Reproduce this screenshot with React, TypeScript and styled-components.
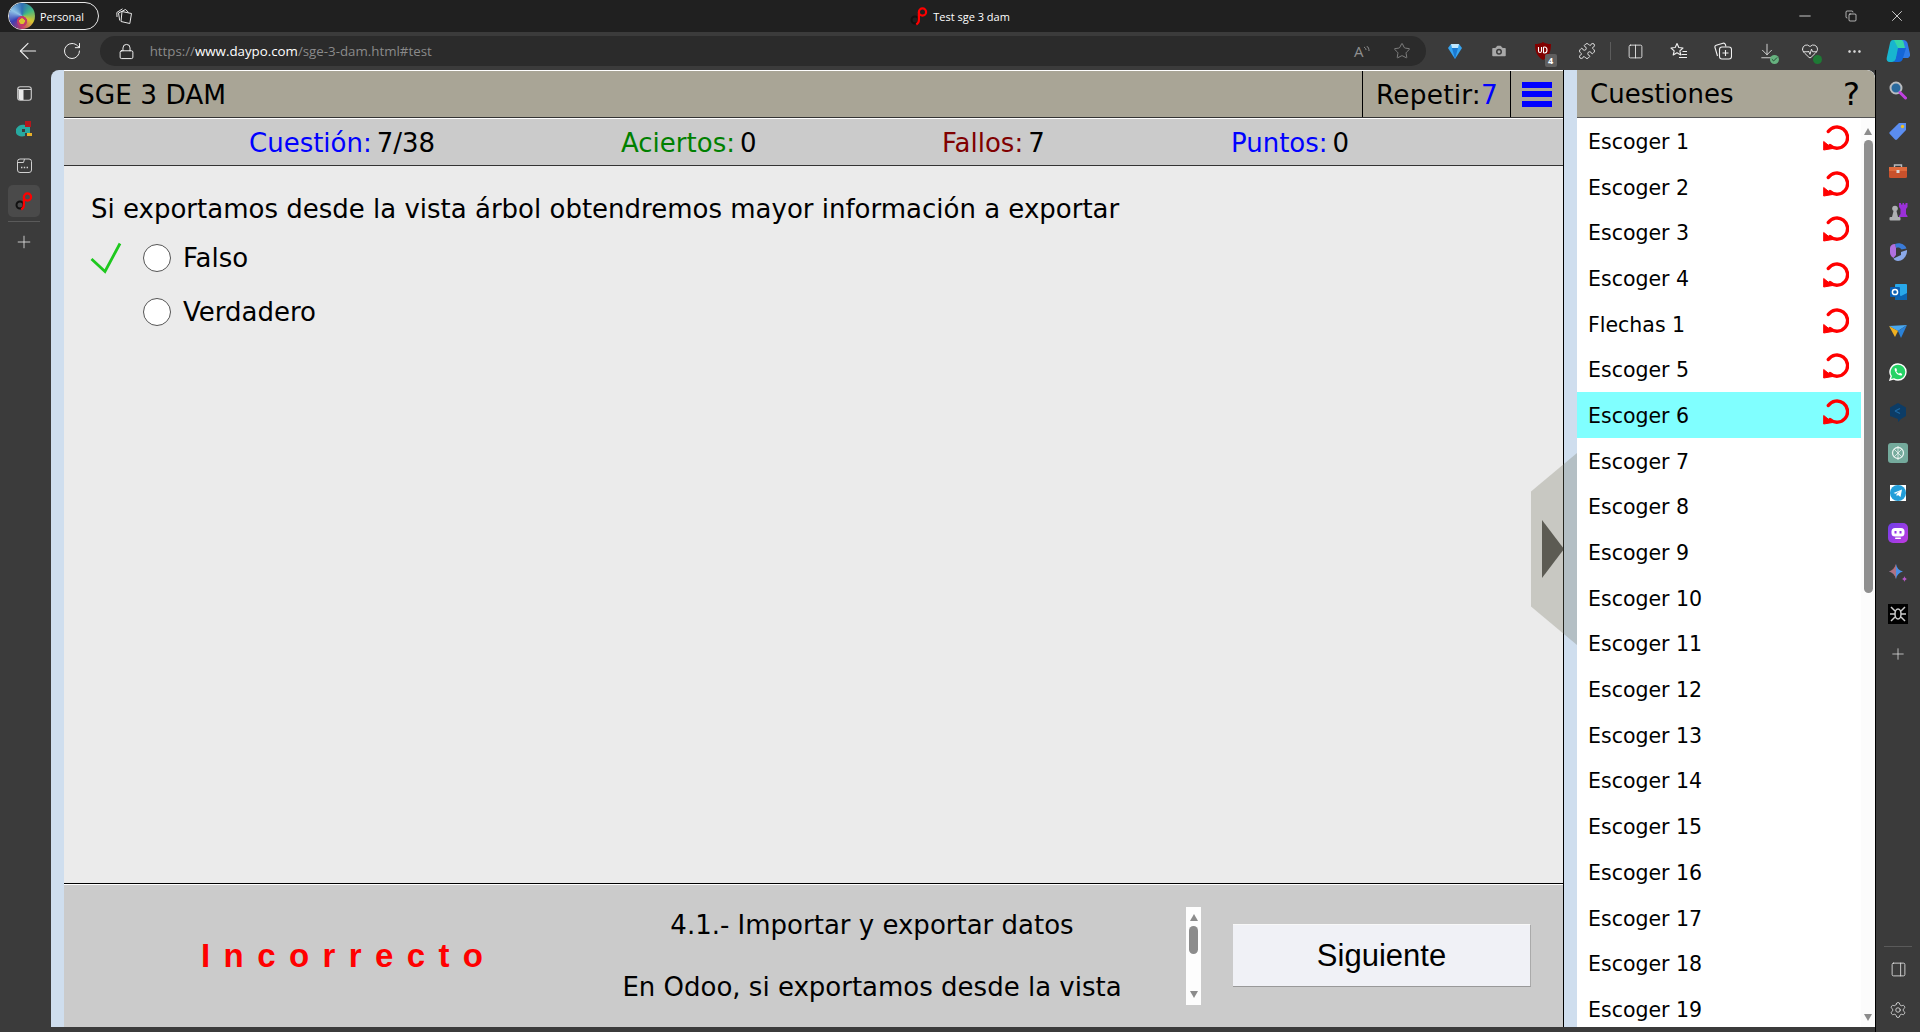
import React from 'react';
import styled, { createGlobalStyle } from 'styled-components';
import {
  ArrowLeft,
  RotateCw,
  Lock,
  Star,
  Puzzle,
  Columns2,
  ArrowDownToLine,
  HeartPulse,
  MoreHorizontal,
  Plus,
  Settings,
  PanelRight,
  Minus,
  X,
  Copy,
  Camera,
  Check,
} from 'lucide-react';

const GlobalStyle = createGlobalStyle`
  html, body {
    margin: 0;
    padding: 0;
    height: 100%;
    background: #3b3b3b;
    overflow: hidden;
  }
  #root { height: 100%; }
  * { box-sizing: border-box; }
`;

const Page = styled.div`
  width: 1920px;
  height: 1032px;
  display: flex;
  flex-direction: column;
  font-family: 'DejaVu Sans', Verdana, sans-serif;
  background: #3b3b3b;
`;

const TitleBar = styled.div`
  height: 32px;
  background: #202020;
  display: grid;
  grid-template-columns: 1fr auto 1fr;
  align-items: center;
  color: #fff;
  font-family: 'Open Sans', sans-serif;
  font-size: 11px;
`;

const TitleLeft = styled.div`
  display: flex;
  align-items: center;
  padding-left: 8px;
  gap: 17px;
`;

const ProfilePill = styled.div`
  height: 28px;
  width: 91px;
  border: 1px solid #e8e8e8;
  border-radius: 14px;
  display: flex;
  align-items: center;
  gap: 5px;
  font-size: 10.8px;
`;

const Avatar = styled.div`
  width: 26px;
  height: 26px;
  border-radius: 50%;
  background:
    radial-gradient(circle at 50% 70%, #d9c530 0 12%, #c23a6b 13% 22%, transparent 24%),
    conic-gradient(#2f6fb5, #42b883, #d9c530, #c23a6b, #3a3fb5, #8fc4e8, #2f6fb5);
`;

const PageTitle = styled.div`
  display: flex;
  align-items: center;
  gap: 5px;
`;

const WindowControls = styled.div`
  display: flex;
  justify-content: flex-end;
  color: #fff;
`;

const WindowButton = styled.div`
  width: 46px;
  height: 32px;
  display: flex;
  align-items: center;
  justify-content: center;
`;

const Toolbar = styled.div`
  height: 38px;
  background: #3b3b3b;
  display: flex;
  align-items: center;
  color: #f0f0f0;
`;

const NavButton = styled.div`
  width: 44px;
  height: 32px;
  display: flex;
  align-items: center;
  justify-content: center;
  &:first-child { margin-left: 6px; }
`;

const AddressBar = styled.div`
  width: 1332px;
  margin-left: 6px;
  height: 30px;
  border-radius: 15px;
  background: #2b2b2b;
  display: flex;
  align-items: center;
  padding: 0 4px 0 18px;
  font-family: 'Open Sans', sans-serif;
  font-size: 13.3px;
  color: #8a8a8a;
  gap: 15px;
`;

const Url = styled.div`
  flex: 1;
  b { color: #fff; font-weight: 400; }
`;

const AddressIcon = styled.div`
  width: 40px;
  margin-left: -15px;
  display: flex;
  align-items: center;
  justify-content: center;
  color: #8f8f8f;
  font-size: 15px;
`;

const ExtensionRow = styled.div`
  display: flex;
  align-items: center;
  padding-left: 7px;
`;

const ExtensionSlot = styled.div`
  position: relative;
  width: 43.8px;
  height: 32px;
  display: flex;
  align-items: center;
  justify-content: center;
`;

const ToolDivider = styled.div`
  width: 1px;
  height: 18px;
  margin: 0 2px;
  background: #5c5c5c;
`;

const CountBadge = styled.span`
  position: absolute;
  right: 8px;
  bottom: 0;
  width: 12px;
  height: 13px;
  background: #5f5f5f;
  border-radius: 2px;
  font-size: 9px;
  font-weight: 700;
  color: #fff;
  text-align: center;
  line-height: 13px;
  font-family: 'Open Sans', sans-serif;
`;

const StatusDot = styled.span<{ $color: string }>`
  position: absolute;
  right: 10px;
  bottom: 3px;
  width: 9px;
  height: 9px;
  border-radius: 50%;
  background: ${(p) => p.$color};
  display: flex;
  align-items: center;
  justify-content: center;
`;

const Workspace = styled.div`
  flex: 1;
  display: flex;
  min-height: 0;
`;

const LeftRail = styled.div`
  width: 51px;
  display: flex;
  flex-direction: column;
  align-items: center;
  padding: 7px 3px 0 0;
  color: #e4e4e4;
`;

const RailIcon = styled.div<{ $active?: boolean }>`
  width: 32px;
  height: 32px;
  margin-bottom: 4px;
  border-radius: 5px;
  display: flex;
  align-items: center;
  justify-content: center;
  background: ${(p) => (p.$active ? '#4a4a4a' : 'transparent')};
`;

const RailDivider = styled.div`
  width: 32px;
  height: 1px;
  background: #5a5a5a;
  margin-bottom: 10px;
`;

const Sheet = styled.div`
  width: 1824px;
  height: 957px;
  display: flex;
  background: #cfdeee;
  border-radius: 8px 8px 0 0;
  padding-left: 13px;
  overflow: hidden;
  position: relative;
  color: #000;
`;

const MainPane = styled.div`
  width: 1500px;
  display: flex;
  flex-direction: column;
  border-right: 1px solid #000;
  background: #fff;
`;

const HeaderBar = styled.div`
  height: 47px;
  margin-top: 1px;
  background: #a9a596;
  border-bottom: 1px solid #333;
  display: flex;
  align-items: stretch;
  font-size: 26.4px;
`;

const HeaderTitle = styled.div`
  flex: 1;
  padding-left: 14px;
  display: flex;
  align-items: center;
`;

const HeaderCell = styled.div<{ $w: number; $center?: boolean }>`
  width: ${(p) => p.$w}px;
  border-left: 1px solid #000;
  display: flex;
  align-items: center;
  justify-content: ${(p) => (p.$center ? 'center' : 'flex-start')};
  padding-left: ${(p) => (p.$center ? 0 : 13)}px;
  letter-spacing: ${(p) => (p.$center ? 0 : 0.2)}px;
`;

const Blue = styled.span`
  color: #0000ff;
`;

const Burger = styled.div`
  width: 30px;
  height: 25px;
  display: flex;
  flex-direction: column;
  justify-content: space-between;
  span {
    height: 6px;
    background: #0000ff;
  }
`;

const StatsBar = styled.div`
  height: 47px;
  margin-top: 1px;
  padding: 2px 0 0 185px;
  background: #cbcbcb;
  border-bottom: 1px solid #333;
  display: flex;
  align-items: center;
  font-size: 26px;
`;

const Stat = styled.div<{ $w: number; $color: string }>`
  width: ${(p) => p.$w}px;
  white-space: nowrap;
  em {
    font-style: normal;
    color: ${(p) => p.$color};
    margin-right: 5px;
  }
`;

const QuestionArea = styled.div`
  flex: 1;
  padding: 26px 27px 0;
  font-size: 26px;
  background: #ebebeb;
`;

const QuestionText = styled.div`
  height: 39px;
  line-height: 34px;
  white-space: nowrap;
`;

const AnswerRow = styled.div`
  height: 54px;
  display: flex;
  align-items: center;
`;

const TickSlot = styled.div`
  width: 52px;
  margin-left: -1px;
  margin-right: 1px;
  display: flex;
  align-items: center;
`;

const Radio = styled.span`
  width: 28px;
  height: 28px;
  border-radius: 50%;
  border: 1.5px solid #555;
  background: #fff;
  margin-right: 12px;
`;

const Footer = styled.div`
  height: 144px;
  border-top: 1px solid #000;
  box-shadow: inset 0 1px 0 #fff;
  background: #cbcbcb;
  display: flex;
  align-items: center;
`;

const Verdict = styled.div`
  width: 541px;
  padding: 1px 0 0 137px;
  font-family: 'Liberation Sans', Arial, sans-serif;
  font-weight: 700;
  font-size: 33px;
  letter-spacing: 13.4px;
  color: #ff0000;
  white-space: nowrap;
`;

const Explanation = styled.div`
  width: 534px;
  height: 120px;
  padding-top: 10px;
  text-align: center;
  font-size: 26px;
  overflow: hidden;
  p {
    margin: 0;
    height: 62px;
    line-height: 38px;
    white-space: nowrap;
  }
`;

const MiniScroll = styled.div`
  width: 15px;
  height: 98px;
  margin-left: 47px;
  background: #fdfdfd;
  display: flex;
  flex-direction: column;
  align-items: center;
  justify-content: space-between;
  padding: 7px 0;
`;

const MiniThumb = styled.div`
  width: 9px;
  height: 28px;
  border-radius: 5px;
  background: #8c8c8c;
  margin-top: -42px;
  margin-bottom: -10px;
`;

const ArrowUp = styled.span`
  width: 0;
  height: 0;
  border-left: 4px solid transparent;
  border-right: 4px solid transparent;
  border-bottom: 7px solid #8c8c8c;
`;

const ArrowDown = styled(ArrowUp)`
  border-bottom: 0;
  border-top: 7px solid #8c8c8c;
`;

const NextButton = styled.div`
  width: 298px;
  height: 63px;
  margin-left: 32px;
  background: #f0f1f6;
  border-top: 1px solid #f8f8f8;
  border-bottom: 1px solid #999;
  border-right: 1px solid #aaa;
  display: flex;
  align-items: center;
  justify-content: center;
  font-family: 'Liberation Sans', Arial, sans-serif;
  font-size: 31px;
`;

const Gutter = styled.div`
  width: 13px;
`;

const SidePane = styled.div`
  width: 298px;
  display: flex;
  flex-direction: column;
  background: #fff;
  border-radius: 0 8px 0 0;
  overflow: hidden;
`;

const SideHeader = styled.div`
  height: 48px;
  background: #a9a596;
  border-bottom: 1px solid #555;
  display: flex;
  align-items: center;
  justify-content: space-between;
  padding: 0 15px 0 13px;
  font-size: 26px;
  flex-shrink: 0;
  span { font-size: 32px; }
`;

const SideBody = styled.div`
  flex: 1;
  display: flex;
  min-height: 0;
  overflow: hidden;
`;

const QuestionList = styled.div`
  width: 284px;
  flex-shrink: 0;
`;

const QuestionRow = styled.div<{ $current?: boolean }>`
  height: 45.7px;
  display: flex;
  align-items: center;
  justify-content: space-between;
  padding: 2px 12px 0 11px;
  font-size: 20.5px;
  background: ${(p) => (p.$current ? '#80ffff' : 'transparent')};
  svg { margin-bottom: 8px; flex-shrink: 0; }
`;

const SideScroll = styled.div`
  flex: 1;
  background: #fcfcfc;
  display: flex;
  flex-direction: column;
  align-items: center;
  padding-top: 10px;
  position: relative;
`;

const SideThumb = styled.div`
  width: 9px;
  height: 453px;
  margin-top: 5px;
  border-radius: 5px;
  background: #8f8f8f;
`;

const SideArrowBottom = styled(ArrowDown)`
  position: absolute;
  bottom: 6px;
`;

const Pull = styled.div`
  position: absolute;
  left: 1480px;
  top: 383px;
  width: 46px;
  height: 192px;
  background: rgba(120, 118, 100, 0.3);
  clip-path: polygon(0 20%, 100% 0, 100% 100%, 0 80%);
  z-index: 2;
`;

const PullArrow = styled.div`
  position: absolute;
  left: 1491px;
  top: 450px;
  width: 0;
  height: 0;
  border-top: 29px solid transparent;
  border-bottom: 29px solid transparent;
  border-left: 22px solid rgba(50, 48, 40, 0.72);
  z-index: 3;
`;

const RightRail = styled.div`
  flex: 1;
  border-left: 1px solid #000;
  display: flex;
  flex-direction: column;
  align-items: center;
  padding: 1px 0 2px;
  color: #e4e4e4;
`;

const RailApp = styled.div`
  height: 40.2px;
  display: flex;
  align-items: center;
  justify-content: center;
  flex-shrink: 0;
`;

const RailSpacer = styled.div`
  flex: 1;
`;

const RailRule = styled.div`
  width: 28px;
  height: 1px;
  background: #5a5a5a;
  margin-bottom: 3px;
`;

const RetryIcon = () => (
  <svg width="26" height="26" viewBox="0 0 26 26" fill="none">
    <path d="M5.300 6.500A10.600 10.600 0 1 1 7 20.600" stroke="#ff0000" strokeWidth="3.400" strokeLinecap="round" />
    <polygon points="0.700,16.500 0.700,25 9.500,23.500" fill="#ff0000" stroke="#ff0000" strokeWidth="1" strokeLinejoin="round" />
  </svg>
);

const DaypoMark = () => (
  <svg width="18" height="19" viewBox="0 0 18 19" fill="none">
    <circle cx="5" cy="13" r="3.500" stroke="#111" strokeWidth="2" />
    <circle cx="12.500" cy="5" r="3.600" stroke="#ff0000" strokeWidth="2.200" />
    <path d="M8.900 5v8c0 2-1 3.500-2.600 4.500" stroke="#ff0000" strokeWidth="2.200" />
  </svg>
);

const CollectionsTab = () => (
  <svg width="17" height="17" viewBox="0 0 17 17" fill="none" stroke="#e6e6e6" strokeWidth="1">
    <path d="M6 3.500l9.500 2-1.700 10-8.800-2z" strokeLinejoin="round" />
    <path d="M3.700 12.500L2.500 5l7-3.500 3 2.800" strokeLinejoin="round" />
    <path d="M1 9L.8 4.500 6.500.8" strokeLinejoin="round" />
  </svg>
);

const ReadAloudWaves = () => (
  <svg width="7" height="10" viewBox="0 0 7 10" fill="none" stroke="#8f8f8f" strokeWidth="1">
    <path d="M1 1c1.500 1 2 2 2 3M3.500 0C5.500 1 6 3 6 5" />
  </svg>
);

const DiamondIcon = () => (
  <svg width="14" height="16" viewBox="0 0 14 16">
    <path d="M3 1h8l3 4-7 11L0 5z" fill="#36a4f0" />
    <path d="M3 1h8l-1 4H4z" fill="#bfe8ff" />
    <path d="M4 5h6l-3 11z" fill="#1a78d0" />
  </svg>
);

const UblockIcon = () => (
  <svg width="16" height="18" viewBox="0 0 16 18">
    <path d="M8 0c2 1.500 5 2 8 2 0 7-1.500 12-8 16C1.500 14 0 9 0 2c3 0 6-.5 8-2z" fill="#800000" />
    <path d="M3.500 5v4a1.500 1.500 0 0 0 3 0V5M8.500 5v6M8.500 5h1a2.500 3 0 0 1 0 6h-1" stroke="#fff" strokeWidth="1.100" fill="none" />
  </svg>
);

const FavoritesIcon = () => (
  <svg width="18" height="18" viewBox="0 0 18 18" fill="none" stroke="#f0f0f0" strokeWidth="1.100" strokeLinejoin="round">
    <path d="M7 1.500l1.800 4 4.200.5-3.200 2.800 1 4.200L7 10.700 3.200 13l1-4.200L1 6l4.200-.5z" />
    <path d="M12.500 9.500H17M11.500 12.500H17M9 15.500h8" />
  </svg>
);

const AddCollectionIcon = () => (
  <svg width="18" height="18" viewBox="0 0 18 18" fill="none" stroke="#f0f0f0" strokeWidth="1.100">
    <rect x="5.500" y="5" width="12" height="12" rx="2.500" />
    <path d="M11.500 8v6M8.500 11h6" />
    <path d="M3.500 14L1 5.500c-.3-1 .3-2 1.200-2.300L9 1.200c1-.3 2 .3 2.400 1.300l.5 2" strokeLinejoin="round" />
  </svg>
);

const CopilotIcon = () => (
  <svg width="24" height="24" viewBox="0 0 24 24">
    <path d="M7 1h8L10.500 19c-.5 2-2 4-4.500 4H3.500C1.500 23 .2 21 .7 19L4 4c.4-2 1.500-3 3-3z" fill="#18b5cf" />
    <path d="M13 1h4.500c2 0 3.500 1.500 4 3L24 15c.4 2-1 4-3 4h-5z" fill="#2e7be8" />
    <path d="M12 9h8l-3 10c-.5 2.500-2 4-4.500 4H6c2 0 3.500-1.500 4-4z" fill="#1466d8" />
    <path d="M8 1h7c1 0 2 .5 2.500 2L19 9h-7z" fill="#35d6a8" />
  </svg>
);

const SearchApp = () => (
  <svg width="18" height="20" viewBox="0 0 18 20" fill="none">
    <circle cx="7" cy="7" r="5.500" fill="#2a6a9e" stroke="#b9bcc0" strokeWidth="2" />
    <path d="M11 11.500l5.500 5.500" stroke="#c040e0" strokeWidth="3" strokeLinecap="round" />
  </svg>
);

const TagApp = () => (
  <svg width="18" height="18" viewBox="0 0 18 18">
    <path d="M10 1h7v7l-9 9.500a1.500 1.500 0 0 1-2 0L.8 12a1.500 1.500 0 0 1 0-2z" fill="#5b8df0" />
    <circle cx="13.500" cy="4.500" r="1.700" fill="#f0c020" />
  </svg>
);

const BriefcaseApp = () => (
  <svg width="18" height="16" viewBox="0 0 18 16" fill="none">
    <path d="M5.500 4V2h7v2" stroke="#b9bcc0" strokeWidth="1.400" />
    <rect y="4" width="18" height="11" rx="1.500" fill="#c8512c" />
    <rect y="4" width="18" height="4" fill="#e06a3c" />
    <rect x="7.500" y="7" width="3" height="3" fill="#d8d8d8" />
  </svg>
);

const ChessApp = () => (
  <svg width="19" height="19" viewBox="0 0 19 19">
    <circle cx="6" cy="6.500" r="2.800" fill="#aeb0b2" />
    <path d="M4.500 9h3l1.500 6H3z" fill="#aeb0b2" />
    <rect x="0.500" y="15" width="11" height="3.500" rx="1" fill="#aeb0b2" />
    <path d="M10 1h2v1.500h1.500V1h1.500v1.500h1.500V1h2v4l-1.500 2v5l1.500 2v1H10v-1l1.500-2V7L10 5z" fill="#9a30d8" />
  </svg>
);

const BingApp = () => (
  <svg width="17" height="18" viewBox="0 0 17 18">
    <path d="M5 1c5-2 10 .5 11.500 4.500l-5 1C10 4.500 8 4 6 5z" fill="#3a7bd8" />
    <path d="M0 5c0-2 2-4 5-4l1 4v7l-2.500 3C1.500 14 0 12 0 9z" fill="#b070e0" />
    <path d="M11 9l6-2c.5 5-3.500 11-9 11-2 0-4-1-4.500-2.500L11 12z" fill="#8aa8e8" />
    <path d="M6 6.500l5 2.500-5 3z" fill="#3a3b3c" />
  </svg>
);

const OutlookApp = () => (
  <svg width="17" height="16" viewBox="0 0 17 16">
    <rect x="5" y="0" width="12" height="16" rx="1" fill="#28a8ea" />
    <path d="M5 9l6 3 6-3v7H5z" fill="#0c64b0" />
    <rect x="0" y="3" width="10" height="10" rx="1" fill="#0a5fb4" />
    <circle cx="5" cy="8" r="2.600" fill="none" stroke="#fff" strokeWidth="1.500" />
  </svg>
);

const PaperPlaneApp = () => (
  <svg width="18" height="14" viewBox="0 0 18 14">
    <path d="M0 1l18-1-9 6z" fill="#49a8ef" />
    <path d="M9 6l9-6-6 13z" fill="#2a82d8" />
    <path d="M0 1l9 5-3 6z" fill="#f0b020" />
  </svg>
);

const WhatsAppIcon = () => (
  <svg width="18" height="18" viewBox="0 0 18 18">
    <path d="M9 1a8 8 0 0 1 0 16c-1.500 0-3-.4-4.200-1.100L1 17l1.200-3.800A8 8 0 0 1 9 1z" fill="#25d366" stroke="#fff" strokeWidth="1.400" />
    <path d="M5.700 5.500l1.400-.5 1 2.300-.8 1c.6 1.100 1.500 2 2.700 2.500l1-1 2.200 1.100-.5 1.500c-3.400.8-7.500-3.400-7-6.900z" fill="#fff" />
  </svg>
);

const HexApp = () => (
  <svg width="16" height="19" viewBox="0 0 16 19">
    <path d="M8 0l8 4.500V13l-5 3-3 3v-3l-8-3V4.500z" fill="#0c3c66" />
    <path d="M5 8l5-2.500M5 8l5 2.500" stroke="#1d6aa5" strokeWidth="1.200" />
  </svg>
);

const GptApp = () => (
  <svg width="20" height="20" viewBox="0 0 20 20" fill="none">
    <rect width="20" height="20" rx="3" fill="#74aa9c" />
    <circle cx="10" cy="10" r="5.500" stroke="#e8f2ef" strokeWidth="1.300" />
    <path d="M6 6l8 8M14 6l-8 8M10 3v14" stroke="#e8f2ef" strokeWidth="0.800" />
  </svg>
);

const TelegramApp = () => (
  <svg width="16" height="16" viewBox="0 0 16 16">
    <rect width="16" height="16" fill="#fff" />
    <circle cx="8" cy="8" r="8" fill="#229ed9" />
    <path d="M3.500 8L12 4.500 10.500 12 8 10l-1.300 1.300L6.500 9 10 6 5.500 8.800z" fill="#fff" />
  </svg>
);

const BotApp = () => (
  <svg width="20" height="20" viewBox="0 0 20 20">
    <defs>
      <linearGradient id="botFill" x1="0" y1="0" x2="1" y2="1">
        <stop offset="0" stopColor="#6d3fe8" />
        <stop offset="1" stopColor="#c23ae0" />
      </linearGradient>
    </defs>
    <rect width="20" height="20" rx="5" fill="url(#botFill)" />
    <rect x="3.500" y="5" width="13" height="8.500" rx="3.500" fill="#fff" />
    <rect x="6.500" y="8" width="2" height="2.500" fill="#9333ea" />
    <rect x="11.500" y="8" width="2" height="2.500" fill="#9333ea" />
    <rect x="7" y="14.500" width="6" height="1.500" rx="0.700" fill="#fff" />
  </svg>
);

const SparkApp = () => (
  <svg width="21" height="21" viewBox="0 0 21 21">
    <path d="M8 1c.8 4 3 6.500 7 7.500-4 1-6.200 3.500-7 7.500-.8-4-3-6.500-7-7.500 4-1 6.200-3.500 7-7.500z" fill="#4a90e8" />
    <path d="M1 8.500C4 7.800 6.500 5 8 1v15c-1-4-3.500-6.800-7-7.500z" fill="#d9655a" opacity="0.700" />
    <path d="M16.500 13c.3 1.800 1.200 2.700 3 3-1.800.3-2.700 1.200-3 3-.3-1.800-1.200-2.700-3-3 1.800-.3 2.700-1.200 3-3z" fill="#b858c8" />
  </svg>
);

const SpiderApp = () => (
  <svg width="20" height="20" viewBox="0 0 20 20" fill="none">
    <rect width="20" height="20" fill="#000" />
    <ellipse cx="10" cy="10" rx="3" ry="5" stroke="#ccc" strokeWidth="1.500" />
    <path d="M7 7L3 3M13 7l4-4M7 10H2M13 10h5M7 13l-4 4M13 13l4 4" stroke="#ccc" strokeWidth="1.500" />
  </svg>
);

const SplitRail = () => (
  <svg width="15" height="15" viewBox="0 0 15 15">
    <rect x="0.700" y="0.700" width="13.600" height="13.600" rx="2.500" fill="none" stroke="#cfcfcf" strokeWidth="1.100" />
    <path d="M1 3.500h13" stroke="#cfcfcf" strokeWidth="1" />
    <path d="M1.500 4h5v10h-3a2 2 0 0 1-2-2z" fill="#eaeaea" />
  </svg>
);

const PixelAppRail = () => (
  <svg width="18" height="17" viewBox="0 0 18 17">
    <path d="M1 8c2-4 6-5 9-4v4H7v3h3v4c-4 1-8 0-9-3z" fill="#27a9a0" />
    <rect x="10" y="0" width="6" height="6" fill="#b5171c" />
    <path d="M10 6h5v6h-5z" fill="#27a9a0" />
    <rect x="12" y="12" width="5" height="3" fill="#e8b028" />
  </svg>
);

const TabDotsRail = () => (
  <svg width="15" height="15" viewBox="0 0 15 15" fill="none" stroke="#d0d0d0" strokeWidth="1">
    <rect x="0.500" y="1" width="14" height="13.500" rx="2.500" />
    <path d="M.5 4.500h6L7.500 1" />
    <path d="M4 9.500h1.400M6.800 9.500h1.400M9.600 9.500h1.400" strokeWidth="1.500" />
  </svg>
);

const questions = [
  'Escoger 1',
  'Escoger 2',
  'Escoger 3',
  'Escoger 4',
  'Flechas 1',
  'Escoger 5',
  'Escoger 6',
  ...Array.from({ length: 13 }, (_, i) => `Escoger ${i + 7}`),
];

const rightApps = [
  SearchApp,
  TagApp,
  BriefcaseApp,
  ChessApp,
  BingApp,
  OutlookApp,
  PaperPlaneApp,
  WhatsAppIcon,
  HexApp,
  GptApp,
  TelegramApp,
  BotApp,
  SparkApp,
  SpiderApp,
];

export default function App() {
  return (
    <Page>
      <GlobalStyle />
      <TitleBar>
        <TitleLeft>
          <ProfilePill>
            <Avatar />
            Personal
          </ProfilePill>
          <CollectionsTab />
        </TitleLeft>
        <PageTitle>
          <DaypoMark />
          Test sge 3 dam
        </PageTitle>
        <WindowControls>
          <WindowButton><Minus size={18} strokeWidth={1} /></WindowButton>
          <WindowButton><Copy size={12} strokeWidth={1.3} /></WindowButton>
          <WindowButton><X size={18} strokeWidth={1} /></WindowButton>
        </WindowControls>
      </TitleBar>

      <Toolbar>
        <NavButton><ArrowLeft size={26} strokeWidth={1} /></NavButton>
        <NavButton><RotateCw size={20} strokeWidth={1.2} /></NavButton>
        <AddressBar>
          <Lock size={17} strokeWidth={1.3} color="#fff" />
          <Url>https://<b>www.daypo.com</b>/sge-3-dam.html#test</Url>
          <AddressIcon>A<ReadAloudWaves /></AddressIcon>
          <AddressIcon><Star size={18} strokeWidth={1.1} /></AddressIcon>
        </AddressBar>
        <ExtensionRow>
          <ExtensionSlot><DiamondIcon /></ExtensionSlot>
          <ExtensionSlot><Camera size={18} fill="#a8a8a8" color="#3b3b3b" /></ExtensionSlot>
          <ExtensionSlot><UblockIcon /><CountBadge>4</CountBadge></ExtensionSlot>
          <ExtensionSlot><Puzzle size={18} strokeWidth={1.2} /></ExtensionSlot>
          <ToolDivider />
          <ExtensionSlot><Columns2 size={17} strokeWidth={1.2} /></ExtensionSlot>
          <ExtensionSlot><FavoritesIcon /></ExtensionSlot>
          <ExtensionSlot><AddCollectionIcon /></ExtensionSlot>
          <ExtensionSlot>
            <ArrowDownToLine size={18} strokeWidth={1.1} />
            <StatusDot $color="#66b27f"><Check size={7} strokeWidth={3} color="#1d3d28" /></StatusDot>
          </ExtensionSlot>
          <ExtensionSlot><HeartPulse size={18} strokeWidth={1.2} /><StatusDot $color="#1e7a35" /></ExtensionSlot>
          <ExtensionSlot><MoreHorizontal size={17} strokeWidth={1.5} /></ExtensionSlot>
          <ExtensionSlot><CopilotIcon /></ExtensionSlot>
        </ExtensionRow>
      </Toolbar>

      <Workspace>
        <LeftRail>
          <RailIcon><SplitRail /></RailIcon>
          <RailIcon><PixelAppRail /></RailIcon>
          <RailIcon><TabDotsRail /></RailIcon>
          <RailIcon $active><DaypoMark /></RailIcon>
          <RailDivider />
          <Plus size={20} strokeWidth={1} />
        </LeftRail>

        <Sheet>
          <MainPane>
            <HeaderBar>
              <HeaderTitle>SGE 3 DAM</HeaderTitle>
              <HeaderCell $w={148}>Repetir:<Blue>7</Blue></HeaderCell>
              <HeaderCell $w={53} $center>
                <Burger><span /><span /><span /></Burger>
              </HeaderCell>
            </HeaderBar>
            <StatsBar>
              <Stat $w={372} $color="#0000ff"><em>Cuestión:</em>7/38</Stat>
              <Stat $w={321} $color="#008000"><em>Aciertos:</em>0</Stat>
              <Stat $w={289} $color="#800000"><em>Fallos:</em>7</Stat>
              <Stat $w={260} $color="#0000ff"><em>Puntos:</em>0</Stat>
            </StatsBar>
            <QuestionArea>
              <QuestionText>Si exportamos desde la vista árbol obtendremos mayor información a exportar</QuestionText>
              <AnswerRow>
                <TickSlot>
                  <svg width="32" height="32" viewBox="0 0 32 32" fill="none">
                    <path d="M1.500 17L15 29.500 30 1.500" stroke="#1ec81e" strokeWidth="2.800" />
                  </svg>
                </TickSlot>
                <Radio />
                Falso
              </AnswerRow>
              <AnswerRow>
                <TickSlot />
                <Radio />
                Verdadero
              </AnswerRow>
            </QuestionArea>
            <Footer>
              <Verdict>Incorrecto</Verdict>
              <Explanation>
                <p>4.1.- Importar y exportar datos</p>
                <p>En Odoo, si exportamos desde la vista</p>
              </Explanation>
              <MiniScroll>
                <ArrowUp />
                <MiniThumb />
                <ArrowDown />
              </MiniScroll>
              <NextButton>Siguiente</NextButton>
            </Footer>
          </MainPane>
          <Gutter />
          <SidePane>
            <SideHeader>
              Cuestiones
              <span>?</span>
            </SideHeader>
            <SideBody>
              <QuestionList>
                {questions.map((q, i) => (
                  <QuestionRow key={q} $current={i === 6}>
                    {q}
                    {i < 7 && <RetryIcon />}
                  </QuestionRow>
                ))}
              </QuestionList>
              <SideScroll>
                <ArrowUp />
                <SideThumb />
                <SideArrowBottom />
              </SideScroll>
            </SideBody>
          </SidePane>
          <Pull />
          <PullArrow />
        </Sheet>

        <RightRail>
          {rightApps.map((Icon, i) => (
            <RailApp key={i}><Icon /></RailApp>
          ))}
          <RailApp><Plus size={18} strokeWidth={1} /></RailApp>
          <RailSpacer />
          <RailRule />
          <RailApp><PanelRight size={17} strokeWidth={1.2} /></RailApp>
          <RailApp><Settings size={18} strokeWidth={1.1} /></RailApp>
        </RightRail>
      </Workspace>
    </Page>
  );
}
